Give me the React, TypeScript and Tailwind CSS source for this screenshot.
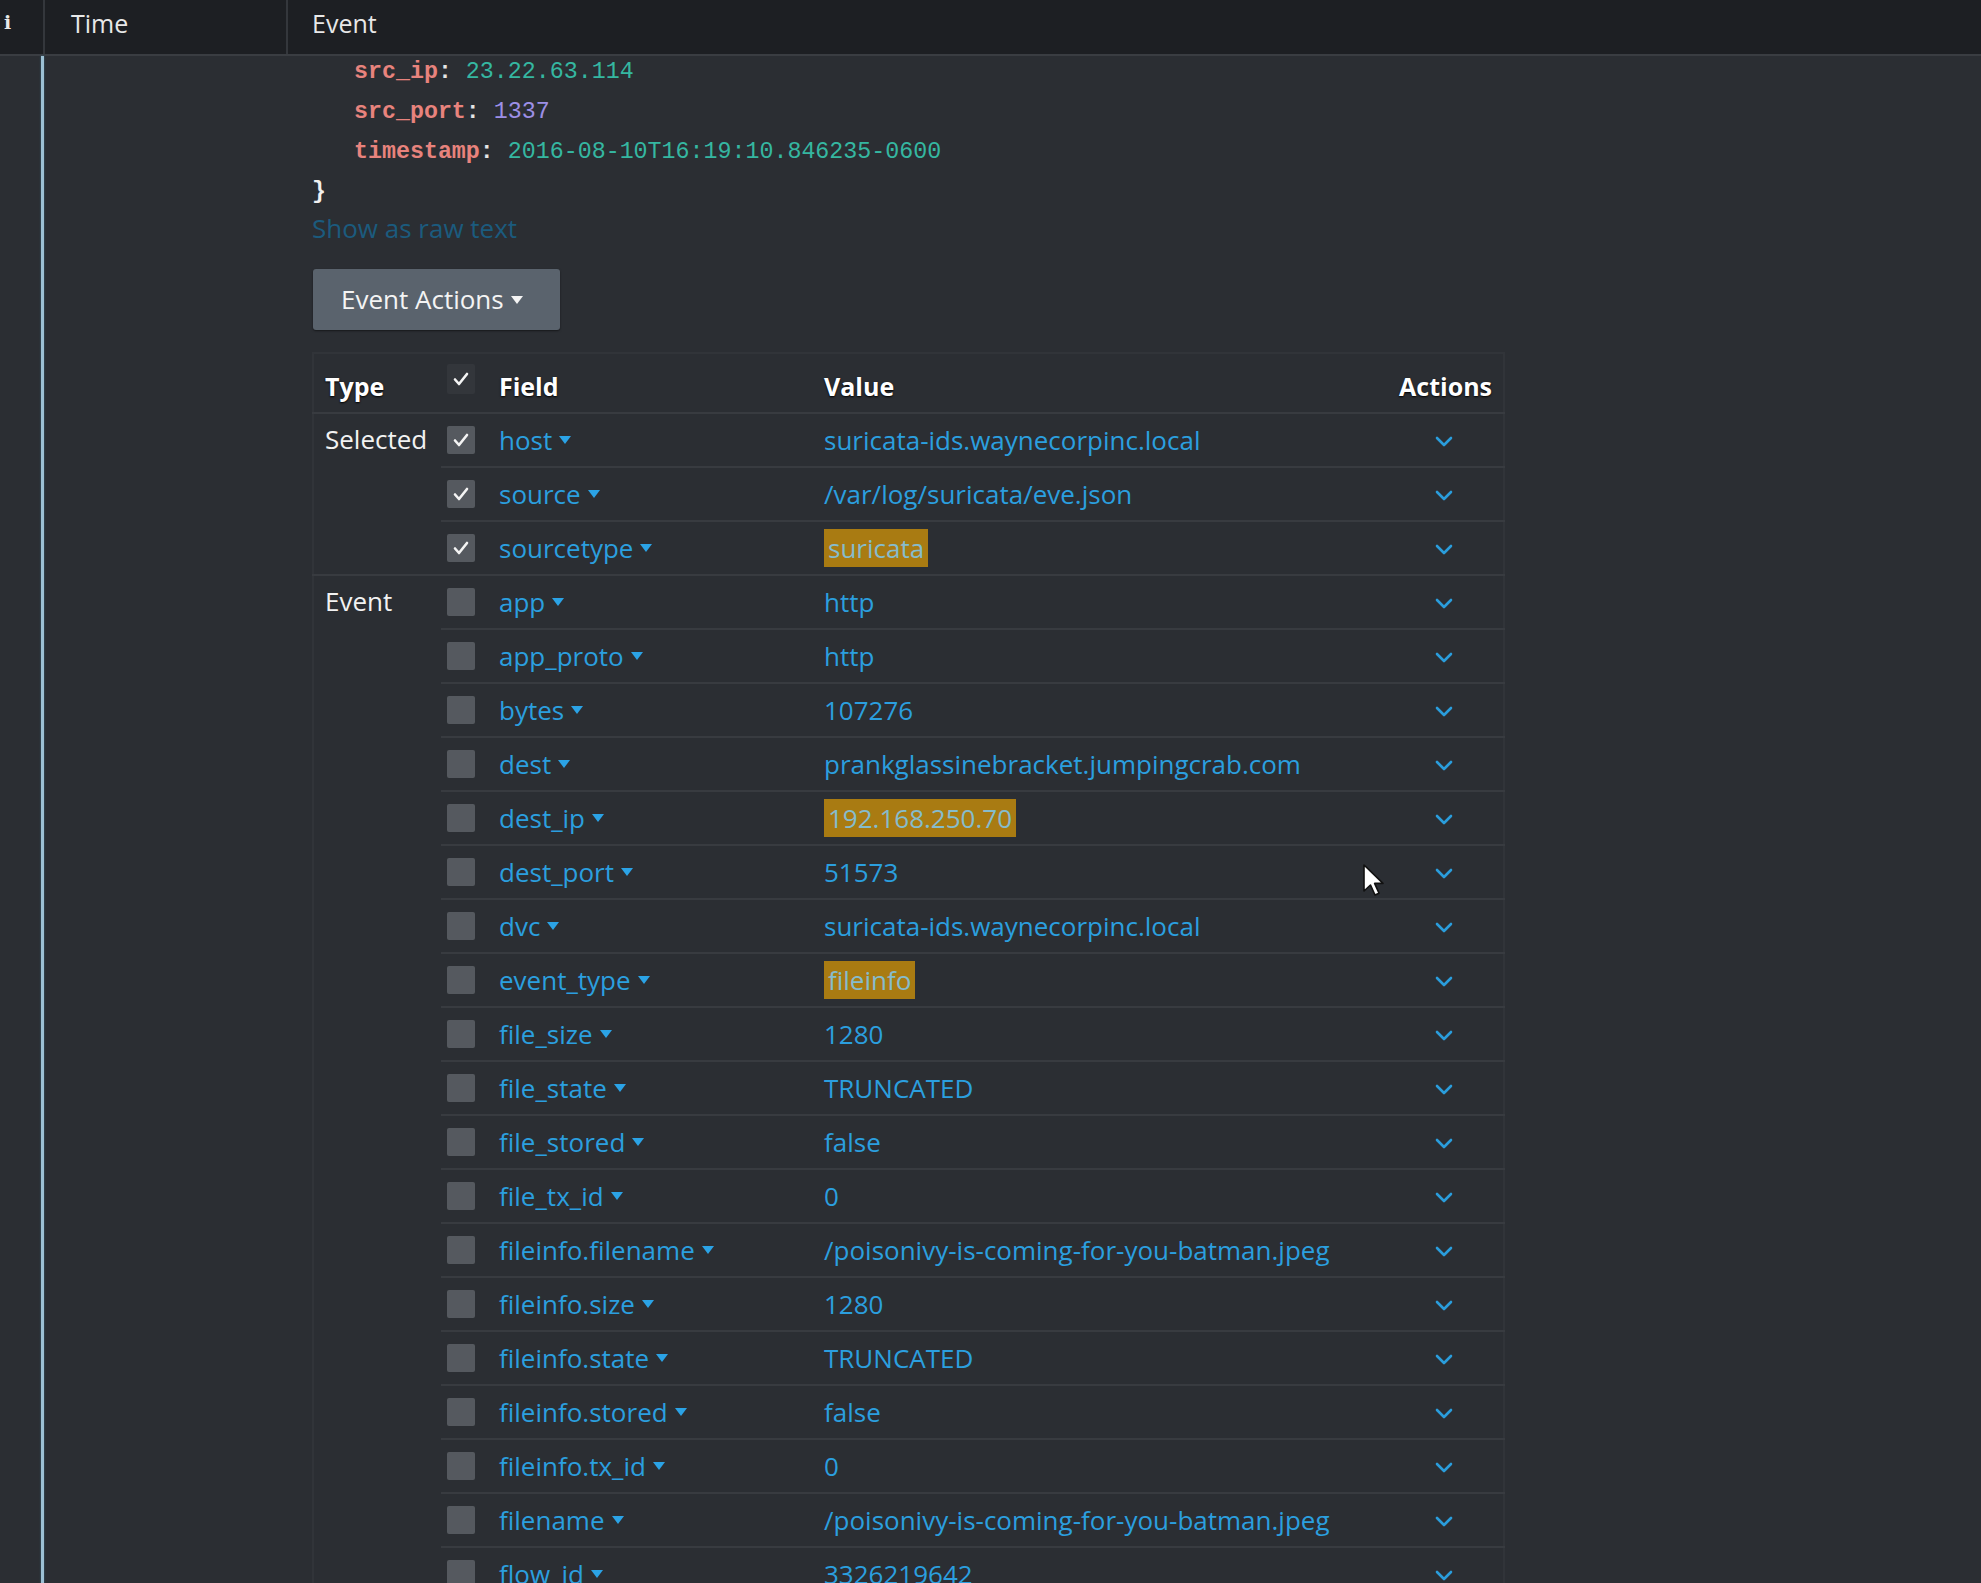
import React from 'react';

type Row = { field: string; value: string; hl?: boolean };

const selectedRows: Row[] = [
  { field: 'host', value: 'suricata-ids.waynecorpinc.local' },
  { field: 'source', value: '/var/log/suricata/eve.json' },
  { field: 'sourcetype', value: 'suricata', hl: true },
];

const eventRows: Row[] = [
  { field: 'app', value: 'http' },
  { field: 'app_proto', value: 'http' },
  { field: 'bytes', value: '107276' },
  { field: 'dest', value: 'prankglassinebracket.jumpingcrab.com' },
  { field: 'dest_ip', value: '192.168.250.70', hl: true },
  { field: 'dest_port', value: '51573' },
  { field: 'dvc', value: 'suricata-ids.waynecorpinc.local' },
  { field: 'event_type', value: 'fileinfo', hl: true },
  { field: 'file_size', value: '1280' },
  { field: 'file_state', value: 'TRUNCATED' },
  { field: 'file_stored', value: 'false' },
  { field: 'file_tx_id', value: '0' },
  { field: 'fileinfo.filename', value: '/poisonivy-is-coming-for-you-batman.jpeg' },
  { field: 'fileinfo.size', value: '1280' },
  { field: 'fileinfo.state', value: 'TRUNCATED' },
  { field: 'fileinfo.stored', value: 'false' },
  { field: 'fileinfo.tx_id', value: '0' },
  { field: 'filename', value: '/poisonivy-is-coming-for-you-batman.jpeg' },
  { field: 'flow_id', value: '3326219642' },
];

const Caret = ({ color = '#2ba3e6' }: { color?: string }) => (
  <svg width="12" height="8" viewBox="0 0 12 8" className="shrink-0">
    <path d="M0 0h12L6 8z" fill={color} />
  </svg>
);

const Chevron = () => (
  <svg width="18" height="11" viewBox="0 0 18 11" fill="none" className="inline-block">
    <path d="M2 2l7 7 7-7" stroke="#2a9ddc" strokeWidth="2.6" strokeLinecap="round" strokeLinejoin="round" />
  </svg>
);

const CheckMark = () => (
  <svg width="18" height="16" viewBox="0 0 18 16" fill="none">
    <path d="M3 8.5l4 4.5 8-10" stroke="#f4f4f4" strokeWidth="2.6" strokeLinecap="round" strokeLinejoin="round" />
  </svg>
);

const Box = ({ checked }: { checked?: boolean }) => (
  <div className="w-[28px] h-[28px] rounded-[2px] bg-[#55595f] flex items-center justify-center">
    {checked && <CheckMark />}
  </div>
);

function FieldRow({ row, checked, type, span }: { row: Row; checked?: boolean; type?: string; span?: number }) {
  const line = 'border-t-2 border-[#383b40]';
  return (
    <tr className="h-[54px]">
      {type && (
        <td rowSpan={span} className={`${line} align-top pl-[11px] pt-[6px] text-[26px] text-[#f2f2f2]`}>
          {type}
        </td>
      )}
      <td className={`${line} pl-[6px]`}>
        <Box checked={checked} />
      </td>
      <td className={line}>
        <div className="flex items-center gap-[7px] pl-[8px] text-[26px] text-[#2b9fdf]">
          <span>{row.field}</span>
          <Caret />
        </div>
      </td>
      <td className={line}>
        <div className="pl-[8px] text-[26px] text-[#2b9fdf] whitespace-nowrap">
          {row.hl ? (
            <span className="inline-block bg-[#a97b12] text-[#86bccc] px-[4px] leading-[38px]">{row.value}</span>
          ) : (
            row.value
          )}
        </div>
      </td>
      <td className={`${line} text-right pr-[50px]`}>
        <Chevron />
      </td>
    </tr>
  );
}

export default function App() {
  return (
    <div
      className="relative w-full h-[1583px] overflow-hidden bg-[#2b2e33] text-[#f0f0f0]"
      style={{ fontFamily: '"Open Sans", Lato, sans-serif' }}
    >
      {/* column header bar */}
      <div className="flex h-[56px] bg-[#1d1f23] border-b-2 border-[#3a3d42] text-[25px] text-[#e8e8e8]">
        <div className="w-[45px] border-r-2 border-[#34373c] pl-[4px] pt-[8px] font-bold text-[19px]" style={{ fontFamily: '"DejaVu Serif", serif' }}>
          i
        </div>
        <div className="w-[243px] border-r-2 border-[#34373c] pl-[26px] pt-[5px]">Time</div>
        <div className="flex-1 pl-[24px] pt-[5px]">Event</div>
      </div>

      <div className="flex">
        <div className="w-[41px] shrink-0" />
        <div className="w-[3px] shrink-0 h-[1540px] bg-[#9cc0d4] shadow-[0_0_2px_#3d6e86]" />
        <div className="w-[268px] shrink-0" />

        <div className="flex-1">
          {/* json tail */}
          <div className="-mt-[4px] leading-[40px] text-[23.3px] font-bold" style={{ fontFamily: '"Liberation Mono", "DejaVu Sans Mono", monospace' }}>
            <div className="pl-[42px]">
              <span className="text-[#e8837d]">src_ip</span>
              <span className="text-[#e6e6e6]">: </span>
              <span className="text-[#35b7a1] font-normal">23.22.63.114</span>
            </div>
            <div className="pl-[42px]">
              <span className="text-[#e8837d]">src_port</span>
              <span className="text-[#e6e6e6]">: </span>
              <span className="text-[#9c8fe6] font-normal">1337</span>
            </div>
            <div className="pl-[42px]">
              <span className="text-[#e8837d]">timestamp</span>
              <span className="text-[#e6e6e6]">: </span>
              <span className="text-[#35b7a1] font-normal">2016-08-10T16:19:10.846235-0600</span>
            </div>
            <div className="text-[#f0f0f0]">{'}'}</div>
          </div>
          <div className="leading-[32px] text-[26px] text-[#1b5b7e]">Show as raw text</div>

          <button className="mt-[25px] ml-[1px] h-[61px] w-[247px] rounded-[3px] bg-[#5a636d] shadow-[0_1px_2px_rgba(0,0,0,0.5)] flex items-center gap-[7px] pl-[28px] text-[26px] text-[#f4f4f4]">
            <span>Event Actions</span>
            <Caret color="#f4f4f4" />
          </button>

          <table className="mt-[22px] w-[1191px] border-collapse border-2 border-[#313439] table-fixed">
            <colgroup>
              <col className="w-[128px]" />
              <col className="w-[50px]" />
              <col className="w-[325px]" />
              <col className="w-[500px]" />
              <col className="w-[188px]" />
            </colgroup>
            <thead>
              <tr className="h-[60px] text-[25px] font-bold text-white [text-shadow:0_1px_2px_#000]">
                <th className="text-left pl-[11px] pt-[8px]">Type</th>
                <th className="pl-[6px] align-top pt-[10px]">
                  <div className="w-[28px] h-[30px] rounded-[2px] bg-[#33363b] flex items-center justify-center">
                    <CheckMark />
                  </div>
                </th>
                <th className="text-left pl-[8px] pt-[8px]">Field</th>
                <th className="text-left pl-[8px] pt-[8px]">Value</th>
                <th className="text-right pr-[11px] pt-[8px]">Actions</th>
              </tr>
            </thead>
            <tbody>
              {selectedRows.map((r, i) => (
                <FieldRow key={r.field} row={r} checked type={i === 0 ? 'Selected' : undefined} span={selectedRows.length} />
              ))}
              {eventRows.map((r, i) => (
                <FieldRow key={r.field} row={r} type={i === 0 ? 'Event' : undefined} span={eventRows.length} />
              ))}
            </tbody>
          </table>
        </div>
      </div>

      {/* mouse pointer */}
      <svg className="absolute left-[1362px] top-[863px]" width="26" height="36" viewBox="0 0 26 36">
        <path d="M2 2v26l6.5-6 4.5 10 4-1.8-4.4-9.8H21z" fill="#fff" stroke="#111" strokeWidth="1.6" strokeLinejoin="round" />
      </svg>
    </div>
  );
}
